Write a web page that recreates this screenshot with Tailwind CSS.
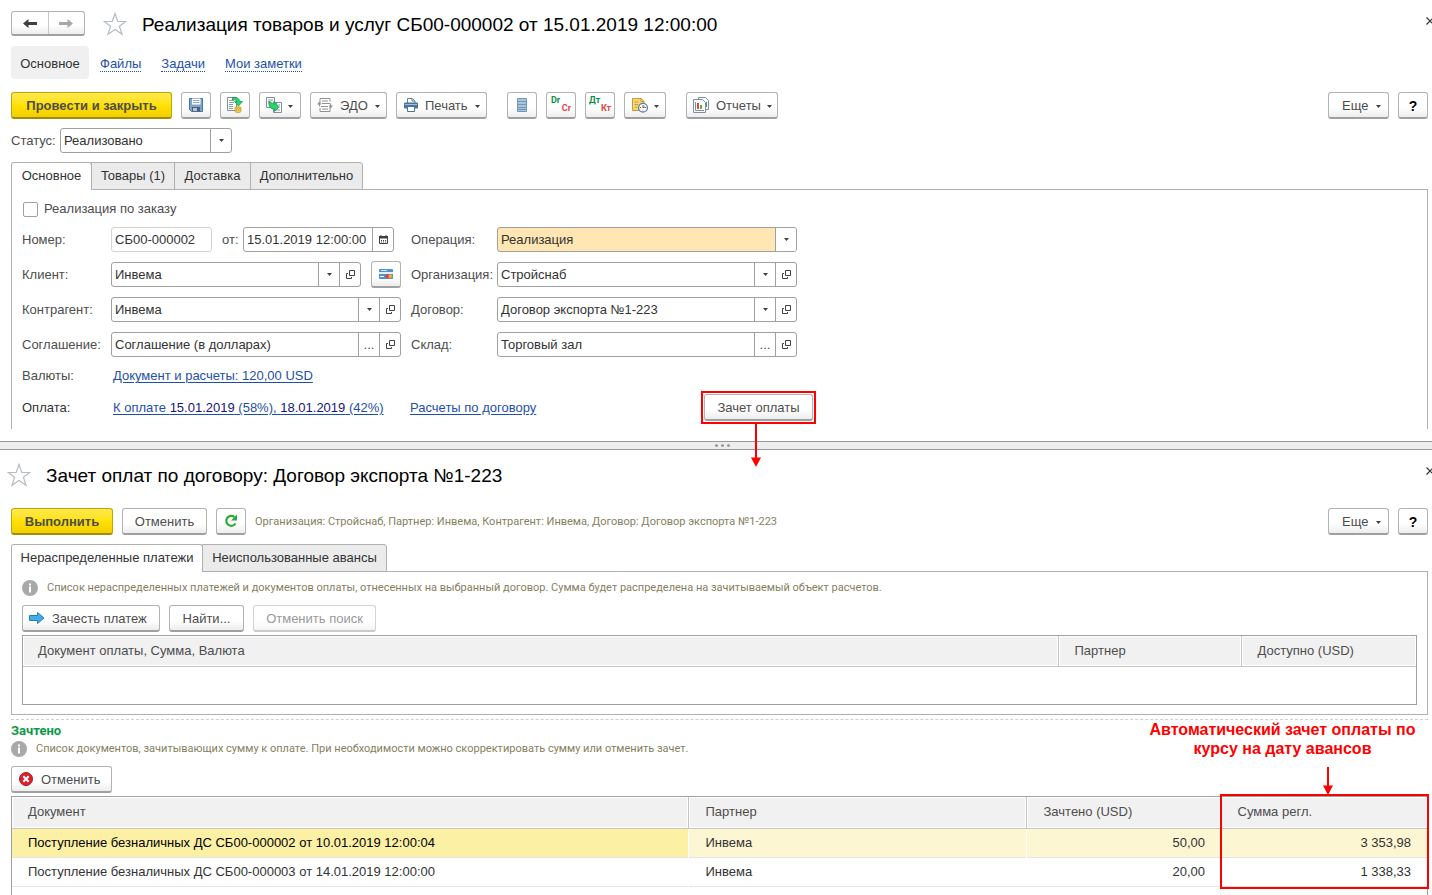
<!DOCTYPE html>
<html lang="ru">
<head>
<meta charset="utf-8">
<title>Реализация товаров и услуг</title>
<script src="https://cdn.jsdelivr.net/npm/@tailwindcss/browser@4"></script>
</head>
<body class="flex min-h-screen flex-col bg-white font-['Liberation_Sans',Arial,sans-serif] text-[13px] leading-4 text-[#4d4d4d]">

<svg class="hidden" aria-hidden="true">
  <symbol id="star" viewBox="0 0 24 24"><path d="M12 1.500l2.800 8h8L16.400 14.300l2.600 8L12 17.400 5 22.300l2.600-8L1.200 9.500h8z" fill="#fff" stroke="#b4bcc4" stroke-width="1.200"/></symbol>
  <symbol id="caret" viewBox="0 0 5 3"><path d="M0 0h5L2.500 3z" fill="#404040"/></symbol>
  <symbol id="open" viewBox="0 0 9 9"><path d="M3.500.5h5v5h-5zM2 3.500H.5v5h5V7" fill="none" stroke="#404040"/></symbol>
  <symbol id="cross" viewBox="0 0 6 8"><path d="M.5.5l7 7M7.500.5l-7 7" fill="none" stroke="#333" stroke-width="1.200"/></symbol>
  <symbol id="info" viewBox="0 0 16 16"><circle cx="8" cy="8" r="8" fill="#a9a9a9"/><path d="M7 3.500h2v2H7zM7 6.500h2v6H7z" fill="#fff"/></symbol>
  <symbol id="arrow-down" viewBox="0 0 10 44"><path d="M5 0v36" stroke="#ff0000" stroke-width="2"/><path d="M0 34.500h10L5 44z" fill="#ff0000"/></symbol>
</svg>

<main class="flex flex-col pl-[11px] pr-1">
  <header class="-mr-1 flex h-[46px] items-center">
    <div class="flex h-[25px] w-[74px] rounded-[3px] border border-b-2 border-[#b3b3b3] border-b-[#a0a0a0] bg-linear-to-b from-white from-60% to-[#ededed]">
      <button aria-label="Назад" class="flex flex-1 items-center justify-center border-r border-[#c8c8c8] pt-px"><svg class="h-[9px] w-[14px]" viewBox="0 0 14 9"><path d="M0 4.500L5.500 0v3H14v3H5.500v3z" fill="#404040"/></svg></button>
      <button aria-label="Вперед" class="flex flex-1 items-center justify-center pt-px"><svg class="h-[9px] w-[14px]" viewBox="0 0 14 9"><path d="M14 4.500L8.500 0v3H0v3h8.500v3z" fill="#a8a8a8"/></svg></button>
    </div>
    <button aria-label="В избранное" class="ml-[18px] pt-[2px]"><svg class="size-6"><use href="#star"/></svg></button>
    <h1 class="ml-[15px] pt-[3px] text-[19px] leading-6 text-black">Реализация товаров и услуг СБ00-000002 от 15.01.2019 12:00:00</h1>
    <button aria-label="Закрыть" class="mb-1 ml-auto"><svg class="h-2 w-[6px]"><use href="#cross"/></svg></button>
  </header>

  <nav class="flex h-[33px] items-center gap-5">
    <span class="-mr-[9px] flex h-full w-[78px] items-center justify-center rounded-[4px] bg-[#f0f0f0] pt-[2px] text-[#333]">Основное</span>
    <a href="#files" class="mt-[3px] border-b border-dotted border-[#1d50a8] leading-[14px] text-[#1d50a8]">Файлы</a>
    <a href="#tasks" class="mt-[3px] border-b border-dotted border-[#1d50a8] leading-[14px] text-[#1d50a8]">Задачи</a>
    <a href="#notes" class="mt-[3px] border-b border-dotted border-[#1d50a8] leading-[14px] text-[#1d50a8]">Мои заметки</a>
  </nav>

  <div class="mt-[13px] flex h-[27px] gap-[9px]">
    <button class="w-[161px] rounded-[3px] border border-b-2 border-[#c2a500] border-b-[#a08a10] bg-linear-to-b from-[#ffe94a] via-[#ffe100] to-[#f2cf00] pt-[2px] font-bold">Провести и закрыть</button>
    <button aria-label="Записать" class="flex w-[30px] items-center justify-center rounded-[3px] border border-b-2 border-[#b3b3b3] border-b-[#a0a0a0] bg-linear-to-b from-white from-60% to-[#ededed]">
      <svg class="size-4" viewBox="0 0 16 16"><path d="M1.500 1.500h13v13h-11l-2-2z" fill="#7aa5d0" stroke="#4a76a6"/><path d="M4 1.500h8.500v6H4z" fill="#fff"/><path d="M5 3.500h6.500M5 5.500h6.500" stroke="#9ab"/><path d="M4 10h8v4.500H4z" fill="#4b5f78"/><path d="M5 11h4v3H5z" fill="#b8c4d0"/></svg>
    </button>
    <button aria-label="Провести" class="flex w-[30px] items-center justify-center rounded-[3px] border border-b-2 border-[#b3b3b3] border-b-[#a0a0a0] bg-linear-to-b from-white from-60% to-[#ededed]">
      <svg class="size-4" viewBox="0 0 16 16"><path d="M.5.5h9v13h-9z" fill="#fff" stroke="#7c8ea0"/><path d="M2 3.500h5M2 5.500h5M2 7.500h4M2 9.500h4M2 11.500h4" stroke="#8b98a6"/><path d="M8 10.500c0-1 6-1 6 0v4c0 1.300-6 1.300-6 0z" fill="#f4cf52" stroke="#c39a2a" stroke-width=".7"/><path d="M8 12.500c1 .8 5 .8 6 0M8 10.500c1 .8 5 .8 6 0" fill="none" stroke="#c39a2a" stroke-width=".7"/><path d="M5.500.5c4-.5 7 .8 7.500 4h2.500l-4 4.500-4-4.500H10c-.5-1.300-2-2-4.500-1.500z" fill="#2bd36b" stroke="#0c9148" stroke-width=".7"/></svg>
    </button>
    <button aria-label="Создать на основании" class="flex w-[42px] items-center gap-[6px] rounded-[3px] border border-b-2 border-[#b3b3b3] border-b-[#a0a0a0] bg-linear-to-b from-white from-60% to-[#ededed] pl-[6px]">
      <svg class="size-4 shrink-0" viewBox="0 0 16 16"><path d="M.5.5h8v10h-8z" fill="#fff" stroke="#7c8ea0"/><path d="M2 3h5M2 5h3" stroke="#8b98a6"/><path d="M7.500 5.500h8v10h-8z" fill="#fff" stroke="#7c8ea0"/><path d="M12 8h2M12 10h2M10 13h4" stroke="#8b98a6"/><path d="M3 4.500l3.500 2L8 4.500l1 3 1-1.500 2.500 4.500-4 4v-2.500C5 12.500 2 9 3 4.500z" fill="#2bd36b" stroke="#0c9148" stroke-width=".7"/></svg>
      <svg class="mt-[2px] h-[3px] w-[5px] shrink-0"><use href="#caret"/></svg>
    </button>
    <button class="flex w-[77px] items-center rounded-[3px] border border-b-2 border-[#b3b3b3] border-b-[#a0a0a0] bg-linear-to-b from-white from-60% to-[#ededed] pl-[6px]">
      <svg class="size-4 shrink-0" viewBox="0 0 16 16"><path d="M3 5.500V1.500h10v3M3 11v3.500h10V10" fill="none" stroke="#909090"/><path d="M5 4h6M5 6.500h8M4 9.500h7M5 12h6" stroke="#909090"/><path d="M0 7.500l2.500-3 2 3zM11.500 8.500h4.500l-2.300 3z" fill="#909090"/><path d="M2.500 7v2.500M13.500 9V6.500" stroke="#909090"/></svg>
      <span class="ml-[7px] pt-[2px]">ЭДО</span><svg class="mt-[2px] ml-[7px] h-[3px] w-[5px]"><use href="#caret"/></svg>
    </button>
    <button class="flex w-[91px] items-center rounded-[3px] border border-b-2 border-[#b3b3b3] border-b-[#a0a0a0] bg-linear-to-b from-white from-60% to-[#ededed] pl-[6px]">
      <svg class="size-4 shrink-0" viewBox="0 0 16 16"><path d="M4.500 6V1.500h5l2.500 2.500v2" fill="#fff" stroke="#6b7f93"/><path d="M9 1.500V4h3" fill="none" stroke="#6b7f93"/><rect x="1" y="5.500" width="14" height="6" rx="1" fill="#46749e"/><path d="M2 7.500h12" stroke="#9cc0de"/><path d="M4.500 9.500h7v5h-7z" fill="#fff" stroke="#46749e"/></svg>
      <span class="ml-[6px] pt-[2px]">Печать</span><svg class="mt-[2px] ml-[7px] h-[3px] w-[5px]"><use href="#caret"/></svg>
    </button>
    <button aria-label="Реестр" class="ml-[11px] flex w-[30px] items-center justify-center rounded-[3px] border border-b-2 border-[#b3b3b3] border-b-[#a0a0a0] bg-linear-to-b from-white from-60% to-[#ededed]">
      <svg class="size-4" viewBox="0 0 16 16"><path d="M3.500 1.500h9v13h-9z" fill="#a9c6dc" stroke="#6f97b6"/><path d="M3 4.500h10M3 7.500h10M3 10.500h10M3 12.500h10" stroke="#6f97b6"/></svg>
    </button>
    <button aria-label="Dr Cr" class="flex w-[30px] flex-col justify-center rounded-[3px] border border-b-2 border-[#b3b3b3] border-b-[#a0a0a0] bg-linear-to-b from-white from-60% to-[#ededed] px-1 pb-[2px] font-[Roboto,sans-serif] text-[9px] leading-2 font-bold"><span class="self-start text-[#0a8f46]">Dr</span><span class="self-end text-[#e04545]">Cr</span></button>
    <button aria-label="Дт Кт" class="flex w-[30px] flex-col justify-center rounded-[3px] border border-b-2 border-[#b3b3b3] border-b-[#a0a0a0] bg-linear-to-b from-white from-60% to-[#ededed] px-[3px] pb-[2px] font-[Roboto,sans-serif] text-[9px] leading-2 font-bold"><span class="self-start text-[#0a8f46]">Дт</span><span class="self-end text-[#e04545]">Кт</span></button>
    <button aria-label="История" class="flex w-[42px] items-center gap-[6px] rounded-[3px] border border-b-2 border-[#b3b3b3] border-b-[#a0a0a0] bg-linear-to-b from-white from-60% to-[#ededed] pl-[7px]">
      <svg class="size-4 shrink-0" viewBox="0 0 16 16"><path d="M.5 1.500h8.500l3 3v9H.5z" fill="#f6d777" stroke="#c79a33"/><path d="M9 1.500v3h3z" fill="#fff3c4" stroke="#c79a33"/><path d="M2.500 5h4M2.500 7.500h4M2.500 10h3" stroke="#c79a33"/><circle cx="11" cy="10.800" r="4.400" fill="#fff" stroke="#5480b0" stroke-width="1.300"/><path d="M11 10.800V8M11 10.800l2-1" stroke="#445" stroke-width=".9"/><path d="M11 13.500v1M8 10.500h1M13 10.500h1" stroke="#d33"/></svg>
      <svg class="mt-[2px] h-[3px] w-[5px] shrink-0"><use href="#caret"/></svg>
    </button>
    <button class="ml-[11px] flex w-[92px] items-center rounded-[3px] border border-b-2 border-[#b3b3b3] border-b-[#a0a0a0] bg-linear-to-b from-white from-60% to-[#ededed] pl-[6px]">
      <svg class="size-4 shrink-0" viewBox="0 0 16 16"><path d="M5.500 2.500v-2h7l3 3v9h-3" fill="#fff" stroke="#7c8ea0"/><path d="M.5 2.500h9l3 3v10H.5z" fill="#fff" stroke="#7c8ea0"/><path d="M4 6h2v6H4z" fill="#e04a3a"/><path d="M7 8h2v4H7z" fill="#58b04a"/><path d="M13 5h1v5h-1z" fill="#3aa05a"/><path d="M2.500 5v8.500H11" fill="none" stroke="#7c8ea0"/></svg>
      <span class="ml-[7px] pt-[2px]">Отчеты</span><svg class="mt-[2px] ml-[6px] h-[3px] w-[5px]"><use href="#caret"/></svg>
    </button>
    <button class="ml-auto flex w-[61px] items-center rounded-[3px] border border-b-2 border-[#b3b3b3] border-b-[#a0a0a0] bg-linear-to-b from-white from-60% to-[#ededed] pl-[13px]"><span class="pt-[2px]">Еще</span><svg class="mt-[2px] ml-[8px] h-[3px] w-[5px]"><use href="#caret"/></svg></button>
    <button class="w-[30px] rounded-[3px] border border-b-2 border-[#b3b3b3] border-b-[#a0a0a0] bg-linear-to-b from-white from-60% to-[#ededed] pt-[2px] text-sm font-bold text-black">?</button>
  </div>

  <div class="mt-[9px] flex h-[25px] items-center">
    <label for="status" class="w-[49px]">Статус:</label>
    <div class="relative h-full w-[172px]">
      <select id="status" class="h-full w-full appearance-none rounded-[3px] border border-[#a0a0a0] bg-white pl-[3px] text-[#333]"><option>Реализовано</option></select>
      <span class="pointer-events-none absolute inset-y-0 right-0 flex w-[22px] items-center justify-center border-l border-[#a0a0a0]"><svg class="h-[3px] w-[5px]"><use href="#caret"/></svg></span>
    </div>
  </div>

  <div role="tablist" class="z-10 mt-[9px] -mb-px flex h-7 text-[#333]">
    <button role="tab" aria-selected="true" class="w-[81px] rounded-t-[3px] border border-b-0 border-[#b0b0b0] bg-white pb-[2px]">Основное</button>
    <button role="tab" class="-ml-px w-[84px] border border-[#b0b0b0] bg-[#ebebeb]">Товары (1)</button>
    <button role="tab" class="-ml-px w-[77px] border border-[#b0b0b0] bg-[#ebebeb]">Доставка</button>
    <button role="tab" class="-ml-px w-[113px] rounded-tr-[3px] border border-[#b0b0b0] bg-[#ebebeb]">Дополнительно</button>
  </div>

  <section class="flex flex-col border border-b-0 border-[#b0b0b0] pl-[10px]">
    <label class="mt-[11px] flex h-4 items-center gap-[6px]"><input type="checkbox" class="ml-px size-[15px] appearance-none rounded-[2px] border border-[#a0a0a0] bg-white">Реализация по заказу</label>

    <div class="mt-[10px] grid grid-cols-[89px_290px_10px_86px_300px] items-center gap-y-[10px]">
      <label for="number">Номер:</label>
      <div class="flex h-[25px] items-center">
        <input id="number" readonly value="СБ00-000002" class="h-full w-[101px] rounded-[3px] border border-[#d4d4d4] px-[3px] text-[#333]">
        <label for="date" class="ml-[10px] w-[21px]">от:</label>
        <div class="flex h-full w-[151px] rounded-[3px] border border-[#a0a0a0]">
          <input id="date" value="15.01.2019 12:00:00" class="w-0 flex-1 pl-[3px] text-[#333]">
          <button aria-label="Календарь" class="flex w-[21px] items-center justify-center border-l border-[#a0a0a0]"><svg class="size-[9px]" viewBox="0 0 9 9"><path d="M.5 2h8v6.500h-8z" fill="#fff" stroke="#404040"/><path d="M0 1h9v2.500H0zM1.500 0h1v1h-1zM6.500 0h1v1h-1z" fill="#404040"/><path d="M2 5.500h5M2 7h5" stroke="#404040" stroke-dasharray="1 1"/></svg></button>
        </div>
      </div>
      <span></span>
      <label for="operation">Операция:</label>
      <div class="relative h-[25px]">
        <select id="operation" class="h-full w-full appearance-none rounded-[3px] border border-[#a0a0a0] bg-[#ffe6b3] pl-[3px] text-[#333]"><option>Реализация</option></select>
        <span class="pointer-events-none absolute inset-y-px right-px flex w-[21px] items-center justify-center rounded-r-[2px] border-l border-[#a0a0a0] bg-white"><svg class="h-[3px] w-[5px]"><use href="#caret"/></svg></span>
      </div>

      <label for="client">Клиент:</label>
      <div class="flex h-[25px] items-center justify-between">
        <div class="flex h-full w-[250px] rounded-[3px] border border-[#a0a0a0]">
          <input id="client" value="Инвема" class="w-0 flex-1 pl-[3px] text-[#333]">
          <button aria-label="Выбрать" class="flex w-[21px] items-center justify-center border-l border-[#a0a0a0]"><svg class="h-[3px] w-[5px]"><use href="#caret"/></svg></button>
          <button aria-label="Открыть" class="flex w-[21px] items-center justify-center border-l border-[#a0a0a0]"><svg class="size-[9px]"><use href="#open"/></svg></button>
        </div>
        <button aria-label="Карта" class="flex h-[27px] w-[30px] items-center justify-center rounded-[3px] border border-b-2 border-[#b3b3b3] border-b-[#a0a0a0] bg-linear-to-b from-white from-60% to-[#ededed]"><svg class="h-[10px] w-[14px]" viewBox="0 0 14 10"><rect width="14" height="10" rx="1" fill="#4f93c9"/><path d="M0 3h14v2H0z" fill="#e4eef6"/><path d="M2 1.500h6" stroke="#cfe3f3"/><path d="M1 7.500h4" stroke="#fff"/><circle cx="8.500" cy="7.300" r="2" fill="#e33b2e"/><circle cx="11.300" cy="7.300" r="2" fill="#f2a33a"/></svg></button>
      </div>
      <span></span>
      <label for="org">Организация:</label>
      <div class="flex h-[25px] rounded-[3px] border border-[#a0a0a0]">
        <input id="org" value="Стройснаб" class="w-0 flex-1 pl-[3px] text-[#333]">
        <button aria-label="Выбрать" class="flex w-[21px] items-center justify-center border-l border-[#a0a0a0]"><svg class="h-[3px] w-[5px]"><use href="#caret"/></svg></button>
        <button aria-label="Открыть" class="flex w-[21px] items-center justify-center border-l border-[#a0a0a0]"><svg class="size-[9px]"><use href="#open"/></svg></button>
      </div>

      <label for="partner">Контрагент:</label>
      <div class="flex h-[25px] rounded-[3px] border border-[#a0a0a0]">
        <input id="partner" value="Инвема" class="w-0 flex-1 pl-[3px] text-[#333]">
        <button aria-label="Выбрать" class="flex w-[21px] items-center justify-center border-l border-[#a0a0a0]"><svg class="h-[3px] w-[5px]"><use href="#caret"/></svg></button>
        <button aria-label="Открыть" class="flex w-[21px] items-center justify-center border-l border-[#a0a0a0]"><svg class="size-[9px]"><use href="#open"/></svg></button>
      </div>
      <span></span>
      <label for="contract">Договор:</label>
      <div class="flex h-[25px] rounded-[3px] border border-[#a0a0a0]">
        <input id="contract" value="Договор экспорта №1-223" class="w-0 flex-1 pl-[3px] text-[#333]">
        <button aria-label="Выбрать" class="flex w-[21px] items-center justify-center border-l border-[#a0a0a0]"><svg class="h-[3px] w-[5px]"><use href="#caret"/></svg></button>
        <button aria-label="Открыть" class="flex w-[21px] items-center justify-center border-l border-[#a0a0a0]"><svg class="size-[9px]"><use href="#open"/></svg></button>
      </div>

      <label for="agreement">Соглашение:</label>
      <div class="flex h-[25px] rounded-[3px] border border-[#a0a0a0]">
        <input id="agreement" value="Соглашение (в долларах)" class="w-0 flex-1 pl-[3px] text-[#333]">
        <button class="w-[21px] border-l border-[#a0a0a0]">...</button>
        <button aria-label="Открыть" class="flex w-[21px] items-center justify-center border-l border-[#a0a0a0]"><svg class="size-[9px]"><use href="#open"/></svg></button>
      </div>
      <span></span>
      <label for="store">Склад:</label>
      <div class="flex h-[25px] rounded-[3px] border border-[#a0a0a0]">
        <input id="store" value="Торговый зал" class="w-0 flex-1 pl-[3px] text-[#333]">
        <button class="w-[21px] border-l border-[#a0a0a0]">...</button>
        <button aria-label="Открыть" class="flex w-[21px] items-center justify-center border-l border-[#a0a0a0]"><svg class="size-[9px]"><use href="#open"/></svg></button>
      </div>
    </div>

    <div class="mt-[11px] flex items-center"><span class="w-[91px]">Валюты:</span><a href="#currency" class="text-[#1d50a8] underline underline-offset-2">Документ и расчеты: 120,00 USD</a></div>
    <div class="mt-[7px] mb-[5px] flex h-[33px] items-center">
      <span class="w-[91px] text-[#333]">Оплата:</span>
      <span class="w-[297px]"><a href="#payment" class="text-[#1d50a8] underline underline-offset-2">К оплате <span class="text-[#15157a]">15.01.2019</span> (58%), <span class="text-[#15157a]">18.01.2019</span> (42%)</a></span>
      <span class="w-[291px]"><a href="#settlements" class="text-[#1d50a8] underline underline-offset-2">Расчеты по договору</a></span>
      <div class="relative h-[33px] w-[115px] border-2 border-[#ff0000] p-px">
        <button class="size-full rounded-[3px] border border-b-2 border-[#b3b3b3] border-b-[#a0a0a0] bg-linear-to-b from-white from-60% to-[#ededed] pt-[2px]">Зачет оплаты</button>
        <svg class="absolute top-full left-12 z-20 h-[46px] w-[10px]"><use href="#arrow-down"/></svg>
      </div>
    </div>
  </section>
</main>

<div class="mt-3 flex h-[9px] items-center justify-center gap-[3px] border-y border-[#999] bg-[#ededed] pl-3">
  <i class="size-[3px] rounded-full bg-[#999]"></i><i class="size-[3px] rounded-full bg-[#999]"></i><i class="size-[3px] rounded-full bg-[#999]"></i>
</div>

<section class="flex flex-1 flex-col pl-[11px] pr-1">
  <header class="-mr-1 -ml-1 flex h-[50px] items-center">
    <button aria-label="В избранное"><svg class="size-6"><use href="#star"/></svg></button>
    <h2 class="ml-[15px] pt-[2px] text-[19px] leading-6 text-black">Зачет оплат по договору: Договор экспорта №1-223</h2>
    <button aria-label="Закрыть" class="mb-2 ml-auto"><svg class="h-2 w-[6px]"><use href="#cross"/></svg></button>
  </header>

  <div class="mt-2 flex h-[27px] items-center gap-[9px]">
    <button class="h-full w-[102px] rounded-[3px] border border-b-2 border-[#c2a500] border-b-[#a08a10] bg-linear-to-b from-[#ffe94a] via-[#ffe100] to-[#f2cf00] pt-[2px] font-bold">Выполнить</button>
    <button class="h-full w-[85px] rounded-[3px] border border-b-2 border-[#b3b3b3] border-b-[#a0a0a0] bg-linear-to-b from-white from-60% to-[#ededed] pt-[2px]">Отменить</button>
    <button aria-label="Обновить" class="flex h-full w-[30px] items-center justify-center rounded-[3px] border border-b-2 border-[#b3b3b3] border-b-[#a0a0a0] bg-linear-to-b from-white from-60% to-[#ededed]"><svg class="size-[14px]" viewBox="0 0 14 14"><path d="M11.500 9.500A5 5 0 1 1 10.500 3" fill="none" stroke="#2ea836" stroke-width="2.200"/><path d="M13 .5v6H7z" fill="#2ea836"/></svg></button>
    <span class="font-[Roboto,sans-serif] text-[11px] text-[#857f60]">Организация: Стройснаб, Партнер: Инвема, Контрагент: Инвема, Договор: Договор экспорта №1-223</span>
    <button class="ml-auto flex h-full w-[61px] items-center rounded-[3px] border border-b-2 border-[#b3b3b3] border-b-[#a0a0a0] bg-linear-to-b from-white from-60% to-[#ededed] pl-[13px]"><span class="pt-[2px]">Еще</span><svg class="mt-[2px] ml-[8px] h-[3px] w-[5px]"><use href="#caret"/></svg></button>
    <button class="h-full w-[30px] rounded-[3px] border border-b-2 border-[#b3b3b3] border-b-[#a0a0a0] bg-linear-to-b from-white from-60% to-[#ededed] pt-[2px] text-sm font-bold text-black">?</button>
  </div>

  <div role="tablist" class="z-10 mt-[9px] -mb-px flex h-7 text-[#333]">
    <button role="tab" aria-selected="true" class="w-[192px] rounded-t-[3px] border border-b-0 border-[#b0b0b0] bg-white pb-[2px]">Нераспределенные платежи</button>
    <button role="tab" class="-ml-px w-[185px] rounded-tr-[3px] border border-[#b0b0b0] bg-[#ebebeb]">Неиспользованные авансы</button>
  </div>

  <section class="border border-[#b0b0b0] px-[10px] pt-2 pb-[9px]">
    <div class="flex items-center gap-[9px]"><svg class="size-4"><use href="#info"/></svg><p class="font-[Roboto,sans-serif] text-[11px] text-[#857f60]">Список нераспределенных платежей и документов оплаты, отнесенных на выбранный договор. Сумма будет распределена на зачитываемый объект расчетов.</p></div>
    <div class="mt-[9px] flex h-[27px] gap-[9px]">
      <button class="flex w-[138px] items-center rounded-[3px] border border-b-2 border-[#b3b3b3] border-b-[#a0a0a0] bg-linear-to-b from-white from-60% to-[#ededed] pl-[6px]"><svg class="h-3 w-4" viewBox="0 0 16 12"><path d="M.5 3.500h8v-3l6.500 5.500-6.500 5.500v-3h-8z" fill="#3daee9" stroke="#2e7bab"/></svg><span class="ml-[7px] pt-[2px]">Зачесть платеж</span></button>
      <button class="w-[75px] rounded-[3px] border border-b-2 border-[#b3b3b3] border-b-[#a0a0a0] bg-linear-to-b from-white from-60% to-[#ededed] pt-[2px]">Найти...</button>
      <button disabled class="w-[123px] rounded-[3px] border border-b-2 border-[#d4d4d4] border-b-[#cacaca] bg-linear-to-b from-white from-60% to-[#f4f4f4] pt-[2px] text-[#999]">Отменить поиск</button>
    </div>
    <div class="mt-[3px] h-[70px] border border-[#a0a0a0]">
      <table class="w-full table-fixed">
        <colgroup><col><col class="w-[183px]"><col class="w-[175px]"></colgroup>
        <thead><tr class="h-[30px] border-b border-[#c4c4c4] text-left">
          <th class="bg-[#f1f1f1] pl-[15px] font-normal shadow-[inset_0_0_0_1px_#fff]">Документ оплаты, Сумма, Валюта</th>
          <th class="border-l border-[#c4c4c4] bg-[#f1f1f1] pl-4 font-normal shadow-[inset_0_0_0_1px_#fff]">Партнер</th>
          <th class="border-l border-[#c4c4c4] bg-[#f1f1f1] pl-4 font-normal shadow-[inset_0_0_0_1px_#fff]">Доступно (USD)</th>
        </tr></thead>
      </table>
    </div>
  </section>

  <div class="relative mt-1 flex flex-1 flex-col border-t border-dashed border-[#cfcfcf] pt-[3px]">
    <h3 class="font-[Roboto,sans-serif] font-bold text-[#0a9a46]">Зачтено</h3>
    <div class="mt-[2px] flex items-center gap-[9px]"><svg class="size-4"><use href="#info"/></svg><p class="font-[Roboto,sans-serif] text-[11px] text-[#857f60]">Список документов, зачитывающих сумму к оплате. При необходимости можно скорректировать сумму или отменить зачет.</p></div>
    <button class="mt-[9px] flex h-[27px] w-[101px] items-center rounded-[3px] border border-b-2 border-[#b3b3b3] border-b-[#a0a0a0] bg-linear-to-b from-white from-60% to-[#ededed] pl-[7px]"><svg class="size-[14px]" viewBox="0 0 14 14"><circle cx="7" cy="7" r="6.500" fill="#d8232a" stroke="#a51a20"/><path d="M4.300 4.300l5.400 5.400M9.700 4.300L4.300 9.700" stroke="#fff" stroke-width="2"/></svg><span class="ml-[8px] pt-[2px]">Отменить</span></button>
    <div class="relative mt-[3px] flex-1 border border-b-0 border-[#a0a0a0]">
      <table class="w-full table-fixed text-[#333]">
        <colgroup><col><col class="w-[338px]"><col class="w-[194px]"><col class="w-[207px]"></colgroup>
        <thead><tr class="h-[31px] border-b border-[#c4c4c4] text-left text-[#4d4d4d]">
          <th class="bg-[#f1f1f1] pl-4 font-normal shadow-[inset_0_0_0_1px_#fff]">Документ</th>
          <th class="border-l border-[#c4c4c4] bg-[#f1f1f1] pl-[17px] font-normal shadow-[inset_0_0_0_1px_#fff]">Партнер</th>
          <th class="border-l border-[#c4c4c4] bg-[#f1f1f1] pl-[17px] font-normal shadow-[inset_0_0_0_1px_#fff]">Зачтено (USD)</th>
          <th class="border-l border-[#c4c4c4] bg-[#f1f1f1] pl-[17px] font-normal shadow-[inset_0_0_0_1px_#fff]">Сумма регл.</th>
        </tr></thead>
        <tbody>
          <tr class="h-[29px] border-b border-[#e4e4e4] bg-[#fdf6d2]"><td class="bg-[#fcf0a4] pl-4 text-black">Поступление безналичных ДС СБ00-000002 от 10.01.2019 12:00:04</td><td class="border-l border-white pl-[17px]">Инвема</td><td class="border-l border-white pr-[15px] text-right">50,00</td><td class="pr-4 text-right">3 353,98</td></tr>
          <tr class="h-[29px] border-b border-[#e4e4e4]"><td class="pl-4">Поступление безналичных ДС СБ00-000003 от 14.01.2019 12:00:00</td><td class="border-l border-white pl-[17px]">Инвема</td><td class="pr-[15px] text-right">20,00</td><td class="pr-4 text-right">1 338,33</td></tr>
        </tbody>
      </table>
      <div class="absolute -top-[3px] -right-[2px] h-[95px] w-[209px] border-2 border-[#ff0000]"></div>
    </div>
    <div class="absolute top-0 right-[11px] flex w-[269px] flex-col text-center text-base leading-[19px] font-bold whitespace-nowrap text-[#ff0000]">
      <p>Автоматический зачет оплаты по<br>курсу на дату авансов</p>
      <svg class="mt-[9px] ml-[175px] h-7 w-[10px]" viewBox="0 0 10 28"><path d="M5 0v20" stroke="#ff0000" stroke-width="2"/><path d="M0 18.500h10L5 28z" fill="#ff0000"/></svg>
    </div>
  </div>
</section>
</body>
</html>
